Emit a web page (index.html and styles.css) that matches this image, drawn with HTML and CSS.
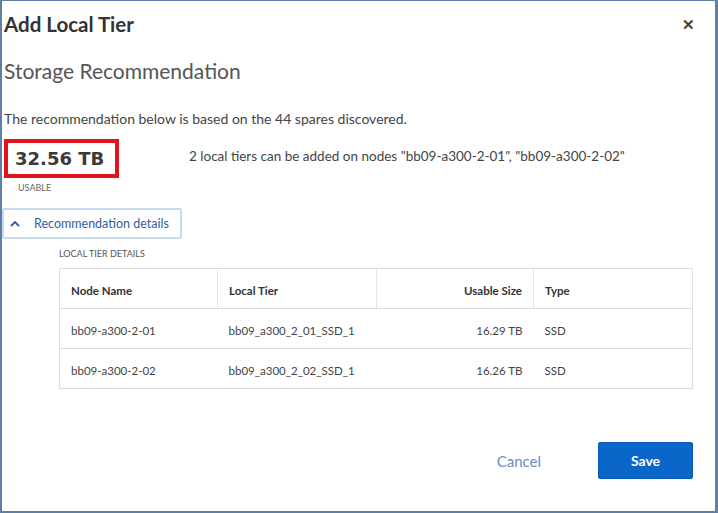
FILE: index.html
```html
<!DOCTYPE html>
<html>
<head>
<meta charset="utf-8">
<link rel="stylesheet" href="styles.css">
</head>
<body>
<div class="dialog">
  <header class="head">
    <h1 class="title">Add Local Tier</h1>
    <span class="close">&#x2715;</span>
  </header>
  <h2 class="subtitle">Storage Recommendation</h2>
  <p class="desc">The recommendation below is based on the 44 spares discovered.</p>
  <div class="summary">
    <div class="usable">
      <div class="usable-box">32.56 TB</div>
      <div class="usable-label">USABLE</div>
    </div>
    <div class="summary-text">2 local tiers can be added on nodes "bb09-a300-2-01", "bb09-a300-2-02"</div>
  </div>
  <button class="toggle"><svg class="caret" width="10" height="7" viewBox="0 0 10 7"><path d="M1 6 L5 2 L9 6" fill="none" stroke="#2f5da0" stroke-width="1.8"/></svg><span>Recommendation details</span></button>
  <div class="details">
    <div class="details-label">LOCAL TIER DETAILS</div>
    <table class="tiers">
      <thead>
        <tr><th class="c1">Node Name</th><th class="c2">Local Tier</th><th class="c3 num">Usable Size</th><th class="c4">Type</th></tr>
      </thead>
      <tbody>
        <tr><td>bb09-a300-2-01</td><td>bb09_a300_2_01_SSD_1</td><td class="num">16.29 TB</td><td>SSD</td></tr>
        <tr><td>bb09-a300-2-02</td><td>bb09_a300_2_02_SSD_1</td><td class="num">16.26 TB</td><td>SSD</td></tr>
      </tbody>
    </table>
  </div>
  <footer class="foot">
    <button class="cancel">Cancel</button>
    <button class="save">Save</button>
  </footer>
</div>
</body>
</html>
```
FILE: styles.css
```css
html, body {
  margin: 0;
  padding: 0;
  background: #fff;
}
.dialog {
  box-sizing: border-box;
  width: 718px;
  height: 513px;
  border-style: solid;
  border-color: #5f7fa3;
  border-width: 1px 3px 2px 2px;
  padding: 0 0 0 2px;
  font-family: "Lato", "Open Sans", sans-serif;
  color: #444;
  background: #fff;
  display: flex;
  flex-direction: column;
}
.head {
  display: flex;
  justify-content: space-between;
  align-items: center;
  padding: 10px 20px 0 0;
  height: 26px;
}
.title {
  margin: 0;
  font-size: 20.5px;
  font-weight: 700;
  color: #333;
  line-height: 26px;
}
.close {
  font-size: 15px;
  font-weight: 700;
  color: #444;
}
.subtitle {
  margin: 21px 0 0;
  font-size: 21px;
  font-weight: 400;
  color: #555;
  line-height: 26px;
}
.desc {
  margin: 27px 0 0;
  font-size: 14px;
  line-height: 16px;
  color: #444;
}
.summary {
  display: flex;
  margin-top: 12px;
}
.usable {
  display: flex;
  flex-direction: column;
  width: 185px;
}
.usable-box {
  box-sizing: border-box;
  width: 115px;
  height: 39px;
  border: 4px solid #e0131f;
  font-family: "DejaVu Sans", sans-serif;
  font-weight: 700;
  font-size: 18px;
  color: #3a3a3a;
  padding-left: 7px;
  line-height: 31px;
}
.usable-label {
  font-size: 9px;
  color: #666;
  margin: 4px 0 0 14px;
  line-height: 11px;
}
.summary-text {
  font-size: 13.5px;
  color: #444;
  margin-top: 9px;
}
.toggle {
  margin: 15px 0 0 -2px;
  width: 180px;
  height: 31px;
  border: 2px solid #c7dbef;
  border-radius: 2px;
  background: #fff;
  display: flex;
  align-items: center;
  padding: 0 0 0 6px;
  font-family: inherit;
  font-size: 12.5px;
  color: #2f5da0;
  cursor: pointer;
}
.caret {
  margin-right: 14px;
}
.details {
  margin-left: 55px;
  margin-right: 22px;
}
.details-label {
  font-size: 9px;
  color: #555;
  margin-top: 9px;
  line-height: 11px;
}
.tiers {
  margin-top: 9px;
  width: 100%;
  border-collapse: collapse;
  border: 1px solid #dcdcdc;
  font-size: 11.5px;
  color: #444;
}
.tiers th {
  text-align: left;
  font-weight: 700;
  height: 36px;
  padding: 3px 11px 0;
  border-right: 1px solid #e4e4e4;
  border-bottom: 1px solid #dcdcdc;
  color: #333;
}
.tiers td {
  height: 36px;
  padding: 3px 11px 0;
  border-bottom: 1px solid #dcdcdc;
}
.tiers .c1 { width: 135px; }
.tiers .c2 { width: 136px; }
.tiers .c3 { width: 134px; }
.tiers th.num, .tiers td.num {
  text-align: right;
}
.foot {
  margin-top: auto;
  margin-bottom: 32px;
  display: flex;
  justify-content: flex-end;
  align-items: center;
  padding-right: 22px;
}
.cancel {
  background: none;
  border: none;
  font-family: inherit;
  font-size: 15px;
  color: #6b8cc4;
  margin-right: 57px;
  padding: 0;
}
.save {
  width: 95px;
  height: 37px;
  background: #0a66c8;
  border: 1px solid #0a5bb4;
  border-radius: 2px;
  color: #fff;
  font-family: inherit;
  font-weight: 700;
  font-size: 14px;
}
```
